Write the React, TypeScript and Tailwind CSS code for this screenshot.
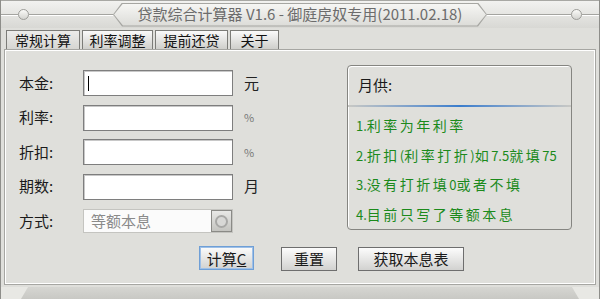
import React from "react";

const TABS = ["常规计算", "利率调整", "提前还贷", "关于"];
const TAB_WIDTHS = ["w-[74px]", "w-[71px]", "w-[73px]", "w-[49px]"];

const FIELDS = [
  { label: "本金:", unit: "元", unitClass: "text-[15px] text-[#222]" },
  { label: "利率:", unit: "%", unitClass: "text-[11px] text-[#777]" },
  { label: "折扣:", unit: "%", unitClass: "text-[11px] text-[#777]" },
  { label: "期数:", unit: "月", unitClass: "text-[15px] text-[#222]" },
];

const TIPS = ["1.利率为年利率", "2.折扣(利率打折)如7.5就填75", "3.没有打折填0或者不填", "4.目前只写了等额本息"];

// ascii runs are narrow in the original bitmap font
function Tip({ text }: { text: string }) {
  const parts = text.split(/([\x00-\x7f]+)/).filter(Boolean);
  return (
    <div className="whitespace-nowrap">
      {parts.map((p, i) =>
        /^[\x00-\x7f]+$/.test(p) ? (
          <span key={i} className="text-[13px] tracking-[0px]">
            {p}
          </span>
        ) : (
          <span key={i}>{p}</span>
        )
      )}
    </div>
  );
}

function TitleLine({ circleFirst }: { circleFirst: boolean }) {
  const circle = (
    <div className="h-[11px] w-[11px] shrink-0 rounded-full border border-[#9c9c98] bg-gradient-to-b from-[#fafaf8] to-[#d4d4d0]" />
  );
  const line = <div className="h-[2px] flex-1 border-t border-[#a4a4a0] border-b border-b-white" />;
  const stub = <div className="h-[2px] w-[17px] border-t border-[#a4a4a0] border-b border-b-white" />;
  return (
    <div className="flex flex-1 items-center">
      {circleFirst ? (
        <>
          {stub}
          {circle}
          {line}
        </>
      ) : (
        <>
          {line}
          {circle}
          {stub}
        </>
      )}
    </div>
  );
}

function Button({ children, focused, w }: { children: React.ReactNode; focused?: boolean; w: string }) {
  return (
    <button
      className={`${w} h-[24px] border ${
        focused ? "border-[#6f9fd6] shadow-[inset_0_0_0_1px_#9ec0e8]" : "border-[#6e6e6e]"
      } bg-gradient-to-b from-[#fcfcfc] to-[#d2d2d0] text-[15px] leading-none text-[#1a1a1a]`}
    >
      {children}
    </button>
  );
}

export default function App() {
  return (
    <div className="flex h-[299px] w-[600px] flex-col overflow-hidden border-x border-[#8e8e8a] bg-[#dfdfdb] font-['Noto_Sans_CJK_SC',sans-serif]">
      {/* title bar */}
      <div className="flex h-[28px] items-center border-t border-[#a8a8a4] bg-gradient-to-b from-[#f2f2f0] to-[#d8d8d4]">
        <TitleLine circleFirst />
        <div className="h-[24px] w-[374px] bg-[#a6a6a2] p-px [clip-path:polygon(9px_0,calc(100%-9px)_0,100%_50%,calc(100%-9px)_100%,9px_100%,0_50%)]">
          <div className="flex h-full items-center justify-center bg-gradient-to-b from-[#f6f6f4] to-[#dcdcd8] text-[15px] text-[#6c6c6c] [clip-path:polygon(9px_0,calc(100%-9px)_0,100%_50%,calc(100%-9px)_100%,9px_100%,0_50%)]">
            贷款综合计算器 V1.6 - 御庭房奴专用(2011.02.18)
          </div>
        </div>
        <TitleLine circleFirst={false} />
      </div>

      {/* tabs */}
      <div className="flex h-[21px] items-end gap-[2px] pl-[5px] pt-[2px]">
        {TABS.map((t, i) => (
          <div
            key={t}
            className={`${TAB_WIDTHS[i]} flex h-[19px] items-center justify-center border border-b-0 border-[#7c7c78] text-[14px] leading-none text-[#111] ${
              i === 0 ? "bg-gradient-to-b from-[#ececea] to-[#d6d6d2]" : "bg-gradient-to-b from-[#fafafa] to-[#cfcfcb]"
            }`}
          >
            {t}
          </div>
        ))}
      </div>

      {/* panel */}
      <div className="mx-[3px] flex h-[236px] flex-col border border-[#a6a6a2] shadow-[inset_1px_1px_0_#fff,inset_-1px_-1px_0_#fff]">
        <div className="flex">
          <div className="flex w-[342px] flex-col gap-[8.5px] pl-[14px] pt-[20px]">
            {FIELDS.map((f, i) => (
              <div key={f.label} className="flex h-[26px] items-center">
                <div className="w-[64px] text-[15px] text-[#1a1a1a]">{f.label}</div>
                <div className="flex h-[26px] w-[150px] items-center border border-[#7e7e7e] bg-white pl-[4px] shadow-[inset_1px_1px_0_#c8c8c8]">
                  {i === 0 && <div className="h-[15px] w-px bg-black" />}
                </div>
                <div className={`ml-[11px] ${f.unitClass}`}>{f.unit}</div>
              </div>
            ))}
            <div className="flex h-[26px] items-center">
              <div className="w-[64px] text-[15px] text-[#1a1a1a]">方式:</div>
              <div className="flex h-[24px] w-[150px] items-center border border-[#c4c4c0] bg-[#fbfbfb] pl-[7px]">
                <span className="flex-1 text-[15px] text-[#8a8a8a]">等额本息</span>
                <div className="flex h-[22px] w-[21px] items-center justify-center border border-[#8a8a86] bg-gradient-to-b from-[#e8e8e6] to-[#c4c4c0]">
                  <div className="h-[13px] w-[13px] rounded-full border-2 border-[#a8a8a6] bg-[#d8d8d6]" />
                </div>
              </div>
            </div>
          </div>

          <div className="mt-[15px] flex h-[165px] w-[225px] flex-col rounded-[4px] border border-[#858581] shadow-[inset_1px_1px_0_#fff]">
            <div className="flex h-[40px] items-center pl-[10px] text-[15px] text-[#1a1a1a]">月供:</div>
            <div className="h-[2px] bg-gradient-to-r from-[#c8c8c4] via-[#3a7dcc] to-[#c8c8c4]" />
            <div className="pl-[8px] pt-[4px] text-[14px] leading-[28.5px] tracking-[2.5px] text-[#1b8a1b]">
              {TIPS.map((t) => (
                <Tip key={t} text={t} />
              ))}
            </div>
          </div>
        </div>

        <div className="mt-[12px] flex pl-[194px]">
          <Button focused w="w-[55px]">
            计算<span className="underline">C</span>
          </Button>
          <div className="ml-[27px]">
            <Button w="w-[56px]">重置</Button>
          </div>
          <div className="ml-[21px]">
            <Button w="w-[106px]">获取本息表</Button>
          </div>
        </div>
      </div>

      {/* bottom bar */}
      <div className="mt-[2px] flex-1 bg-[#e8e8e4]">
        <div className="mx-[20px] h-full bg-gradient-to-b from-[#d6d6d2] to-[#c8c8c4] [clip-path:polygon(7px_0,calc(100%-7px)_0,100%_100%,0_100%)]" />
      </div>
    </div>
  );
}
